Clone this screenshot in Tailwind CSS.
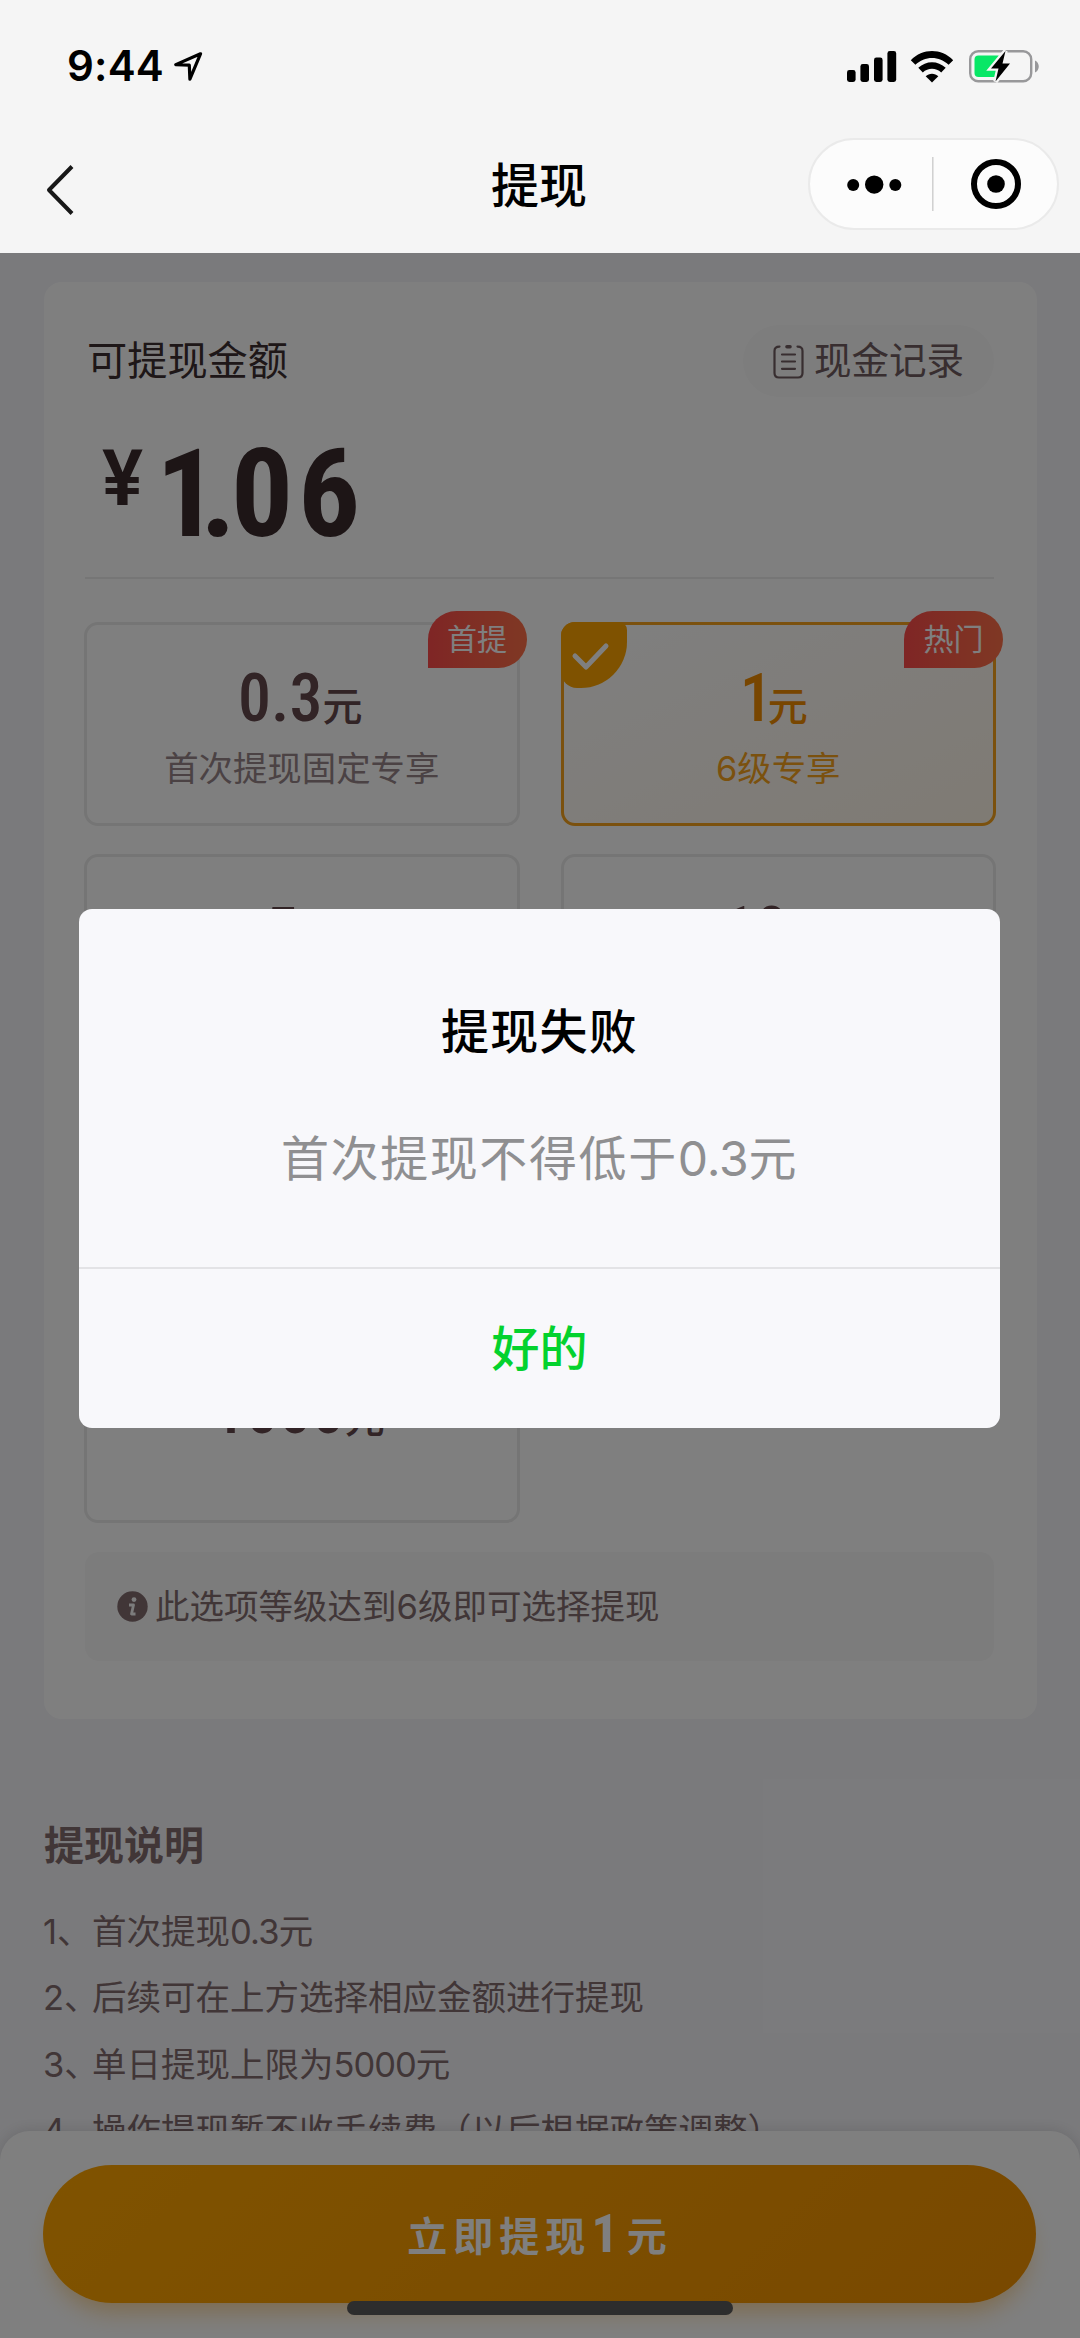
<!DOCTYPE html>
<html lang="zh-CN">
<head>
<meta charset="utf-8">
<title>提现</title>
<script src="https://cdn.jsdelivr.net/npm/@tailwindcss/browser@4"></script>
</head>
<body class="bg-[#f5f5f9]">
<div class="relative w-[1080px] h-[2338px] overflow-hidden bg-[#f5f5f9] font-['Inter','Noto_Sans_CJK_SC',sans-serif] flex flex-col">

  <!-- status bar and navigation bar -->
  <header class="h-[253px] shrink-0 bg-[#f5f5f5] flex flex-col">
    <div class="h-[132px] pl-[67px] pr-[40px] flex items-center justify-between">
      <div class="flex items-center gap-[10px]">
        <span class="text-[42px] leading-[42px] font-semibold text-black tracking-[0.2px]">9:44</span>
        <svg class="w-[30px] h-[30px]" viewBox="0 0 30 30" fill="none" stroke="#000" stroke-width="3.2" stroke-linejoin="round"><path d="M26.500 2.800 1.800 13.600 15.300 14.200 15.900 28.200Z"/></svg>
      </div>
      <div class="flex items-center">
        <svg class="w-[50px] h-[32px]" viewBox="0 0 50 32"><rect x="0" y="20" width="8.600" height="12" rx="2.400"/><rect x="13.400" y="14" width="8.600" height="18" rx="2.400"/><rect x="27" y="7.600" width="8.600" height="24.400" rx="2.400"/><rect x="40.400" y="1" width="8.800" height="31" rx="2.400"/></svg>
        <svg class="w-[44px] h-[33px] ml-[13px]" viewBox="0 0 44 33"><path d="M.8 10.200C12.600-2 31.400-2 43.200 10.200L38.600 14.800C29.500 5.600 14.500 5.600 5.400 14.800Z"/><path d="M8.300 17.800C16 10.300 28 10.300 35.700 17.800L31.200 22.400C26 17.400 18 17.400 12.800 22.400Z"/><path d="M22 32.600 15.700 26.200C19 22.800 25 22.800 28.300 26.200Z"/></svg>
        <svg class="w-[71px] h-[36px] ml-[15px]" viewBox="0 0 71 36"><rect x="1.200" y="3.200" width="61" height="30" rx="8" fill="none" stroke="#98989a" stroke-width="2.400"/><path d="M66 12.500C71 14.500 71 22.500 66 24.500Z" fill="#98989a"/><rect x="5.500" y="7.500" width="27" height="21.500" rx="4" fill="#08e766"/><path d="M36.500 3 22 20.500H29.500L26.500 33.500 41 15.500H33.500Z" stroke="#f5f5f5" stroke-width="4.500" fill="#000" paint-order="stroke"/></svg>
      </div>
    </div>
    <div class="h-[104px] grid grid-cols-3 items-center px-[21px]">
      <svg class="w-[30px] h-[52px] mt-[12px] ml-[24px]" viewBox="0 0 30 52" fill="none" stroke="#181818" stroke-width="4" stroke-linejoin="round"><path d="M27 2.500 4 26 27 49.500"/></svg>
      <h1 class="text-center text-[48px] leading-[60px] font-medium text-black mt-[4px] -ml-[2px]">提现</h1>
      <div class="justify-self-end w-[251px] h-[92px] rounded-full border-2 border-[#eaeaea] bg-[#fcfcfc] flex items-center">
        <svg class="w-full h-full" viewBox="0 0 247 88"><circle cx="43.200" cy="45" r="6"/><circle cx="64.200" cy="44.600" r="9.200"/><circle cx="85.300" cy="45" r="6"/><path d="M122.800 17V71" stroke="#cfcfcf" stroke-width="1.500"/><circle cx="186" cy="44" r="22" fill="none" stroke="#000" stroke-width="6"/><circle cx="186" cy="44" r="8.800"/></svg>
      </div>
    </div>
  </header>

  <!-- balance card -->
  <main class="flex flex-col pt-[29px]">
    <section class="ml-[44px] mr-[43px] h-[1437px] rounded-[18px] bg-white pt-[43px] px-[41px] flex flex-col">
      <div class="h-[72px] flex items-center justify-between">
        <h2 class="text-[40.200px] leading-[60px] text-[#3c2e30] pl-[2px]">可提现金额</h2>
        <div class="w-[251px] h-[72px] mr-[2px] rounded-full bg-[#fafafa] flex items-center pl-[30px] gap-[10px]">
          <svg class="w-[31px] h-[35px]" viewBox="0 0 31 35" fill="none" stroke="#705c60" stroke-width="2.200" stroke-linecap="round"><path d="M6.500 2.600C3 2.600 1.500 4.200 1.500 7V29C1.500 32 3.200 33.500 6 33.500H25C27.800 33.500 29.500 32 29.500 29V7C29.500 4.200 28 2.600 24.500 2.600M9 10.500H22M9 17.500H22M9 24.800H22"/><path d="M14 2.800H17" stroke-width="3.600"/></svg>
          <span class="text-[37.500px] leading-[56px] text-[#705c60]">现金记录</span>
        </div>
      </div>
      <div class="h-[180px] pl-[17px] flex items-start font-['Roboto'] font-bold text-[#3a2a2c]">
        <span class="text-[77px] leading-[76px] mt-[44px] w-[54px] font-semibold">¥</span>
        <span class="text-[123px] leading-[124px] mt-[35px] font-stretch-[80%]"><span class="tracking-[-18px]">1</span><span class="tracking-[-5px]">.</span><span class="tracking-[5px]">0</span>6</span>
      </div>
      <div class="h-[2px] bg-[#ececec] mr-[2px]"></div>

      <div class="mt-[43px] -ml-px grid grid-cols-2 auto-rows-[204px] gap-x-[41px] gap-y-[28.400px]">
        <div class="relative rounded-[14px] border-[3px] border-[#ebebeb] flex flex-col items-center pt-[39px]">
          <div class="flex items-baseline text-[#64484c] font-medium pr-[3px]"><span class="font-['Roboto'] font-stretch-[84%] font-[480] text-[66px] leading-[70px]">0.3</span><span class="text-[40px] leading-[70px]">元</span></div>
          <div class="text-[34.400px] leading-[50px] mt-[2px] text-[#968488]">首次提现固定专享</div>
          <div class="absolute -right-[10px] -top-[14px] w-[99px] h-[57px] rounded-[29px] rounded-bl-none bg-linear-to-r from-[#ff4b4a] to-[#ff7048] text-white text-[30px] leading-[57px] text-center">首提</div>
        </div>
        <div class="relative rounded-[14px] border-[3px] border-[#f6a31c] bg-linear-to-br from-white via-[#fffaf4] to-[#fff6e8] flex flex-col items-center pt-[39px]">
          <div class="flex items-baseline text-[#f08c00] font-medium pr-[9px]"><span class="font-['Roboto'] font-stretch-[84%] text-[66px] leading-[70px] tracking-[-5px]">1</span><span class="text-[40px] leading-[70px]">元</span></div>
          <div class="text-[34.400px] leading-[50px] mt-[2px] text-[#f6a31c]">6级专享</div>
          <div class="absolute -left-[3px] -top-[3px] w-[66px] h-[66px] rounded-tl-[14px] rounded-br-[46px] rounded-bl-[16px] rounded-tr-[8px] bg-[#ffa500] flex items-center justify-center">
            <svg class="w-[40px] h-[32px] mt-[3px] mr-[8px]" viewBox="0 0 40 32" fill="none" stroke="#fff" stroke-width="5" stroke-linecap="round" stroke-linejoin="round"><path d="M5 15 16 26 36 5"/></svg>
          </div>
          <div class="absolute -right-[10px] -top-[14px] w-[99px] h-[57px] rounded-[29px] rounded-bl-none bg-linear-to-r from-[#ff4b4a] to-[#ff7048] text-white text-[30px] leading-[57px] text-center">热门</div>
        </div>
        <div class="rounded-[14px] border-[3px] border-[#ebebeb] flex flex-col items-center pt-[41px]">
          <div class="flex items-baseline text-[#64484c] font-medium"><span class="font-['Roboto'] font-stretch-[84%] text-[66px] leading-[70px]">5</span><span class="text-[40px] leading-[70px]">元</span></div>
        </div>
        <div class="rounded-[14px] border-[3px] border-[#ebebeb] flex flex-col items-center pt-[40px]">
          <div class="flex items-baseline text-[#64484c] font-medium pr-[6px]"><span class="font-['Roboto'] font-stretch-[84%] text-[66px] leading-[70px]">10</span><span class="text-[40px] leading-[70px]">元</span></div>
        </div>
        <div class="rounded-[14px] border-[3px] border-[#ebebeb]"></div>
        <div class="rounded-[14px] border-[3px] border-[#ebebeb]"></div>
        <div class="rounded-[14px] border-[3px] border-[#ebebeb] flex flex-col items-center pt-[54px]">
          <div class="flex items-baseline text-[#64484c] font-medium pr-[6px]"><span class="font-['Roboto'] font-stretch-[84%] text-[66px] leading-[70px]">1000</span><span class="text-[40px] leading-[70px]">元</span></div>
        </div>
      </div>

      <div class="mt-[29px] mr-[2px] h-[109px] rounded-[14px] bg-[#f9f9f9] flex items-center pl-[32px] gap-[7px]">
        <svg class="w-[31px] h-[31px]" viewBox="0 0 31 31"><circle cx="15.500" cy="15.500" r="15.200" fill="#826c6f"/><circle cx="17" cy="8.600" r="2.400" fill="#f9f9f9"/><path d="M12 14H16.500L14.500 23H18.500" fill="none" stroke="#f9f9f9" stroke-width="2.800" stroke-linejoin="round"/></svg>
        <span class="text-[34.500px] leading-[50px] text-[#826c6f]">此选项等级达到6级即可选择提现</span>
      </div>
    </section>

    <section class="px-[44px] pt-[97px] text-[#826c6f]">
      <h3 class="text-[40px] leading-[60px] font-bold">提现说明</h3>
      <ol class="mt-[23px] text-[34.500px] leading-[66.300px]">
        <li class="flex"><span class="w-[48px] -ml-px mr-px shrink-0 whitespace-nowrap">1<span class="tracking-[-9px]">、</span></span><span>首次提现<span class="tracking-[-0.800px]">0.3</span>元</span></li>
        <li class="flex"><span class="w-[48px] -ml-px mr-px shrink-0 whitespace-nowrap">2<span class="tracking-[-9px]">、</span></span><span>后续可在上方选择相应金额进行提现</span></li>
        <li class="flex"><span class="w-[48px] -ml-px mr-px shrink-0 whitespace-nowrap">3<span class="tracking-[-9px]">、</span></span><span>单日提现上限为<span class="tracking-[-1px]">5000</span>元</span></li>
        <li class="flex"><span class="w-[48px] -ml-px mr-px shrink-0 whitespace-nowrap">4<span class="tracking-[-9px]">、</span></span><span>操作提现暂不收手续费（以后根据政策调整）</span></li>
      </ol>
    </section>
  </main>

  <!-- bottom action bar -->
  <footer class="absolute left-0 right-0 bottom-0 h-[207px] rounded-t-[30px] bg-white shadow-[0_0_16px_rgba(0,0,0,0.14)] pl-[43px] pr-[44px] pt-[34px]">
    <div class="h-[138px] rounded-full bg-linear-135 from-[#ffa600] to-[#f29200] shadow-[0_16px_24px_-8px_rgba(246,160,20,0.45)] flex items-center justify-center text-white font-bold pt-[5px] pr-[5px]">
      <span class="text-[40px] leading-[60px] tracking-[6px]">立即提现</span><span class="font-['Roboto'] font-stretch-[85%] text-[54px] leading-[60px] mb-[6px]">1</span><span class="text-[40px] leading-[60px] ml-[8px]">元</span>
    </div>
  </footer>

  <!-- dimming layer with dialog -->
  <div class="absolute left-0 right-0 top-[253px] bottom-0 bg-black/50">
    <div role="dialog" class="ml-[79px] mt-[656px] w-[921px] h-[519px] rounded-[13px] bg-[#f8f8fb] flex flex-col">
      <div class="h-[358px] flex flex-col items-center pt-[91px]">
        <div class="text-[48px] leading-[64px] tracking-[1.200px] font-medium text-black">提现失败</div>
        <div class="text-[48px] leading-[64px] tracking-[1.600px] mt-[63px] text-[#8f8f91]">首次提现不得低于<span class="tracking-[-0.200px]">0.3</span>元</div>
      </div>
      <button class="flex-1 border-t-2 border-[#e3e3e6] text-[48px] leading-[64px] font-medium text-[#04d22e]">好的</button>
    </div>
  </div>
  <div class="absolute left-[347px] bottom-[23px] w-[386px] h-[14px] rounded-full bg-[#2d2d2d]"></div>
</div>
</body>
</html>
